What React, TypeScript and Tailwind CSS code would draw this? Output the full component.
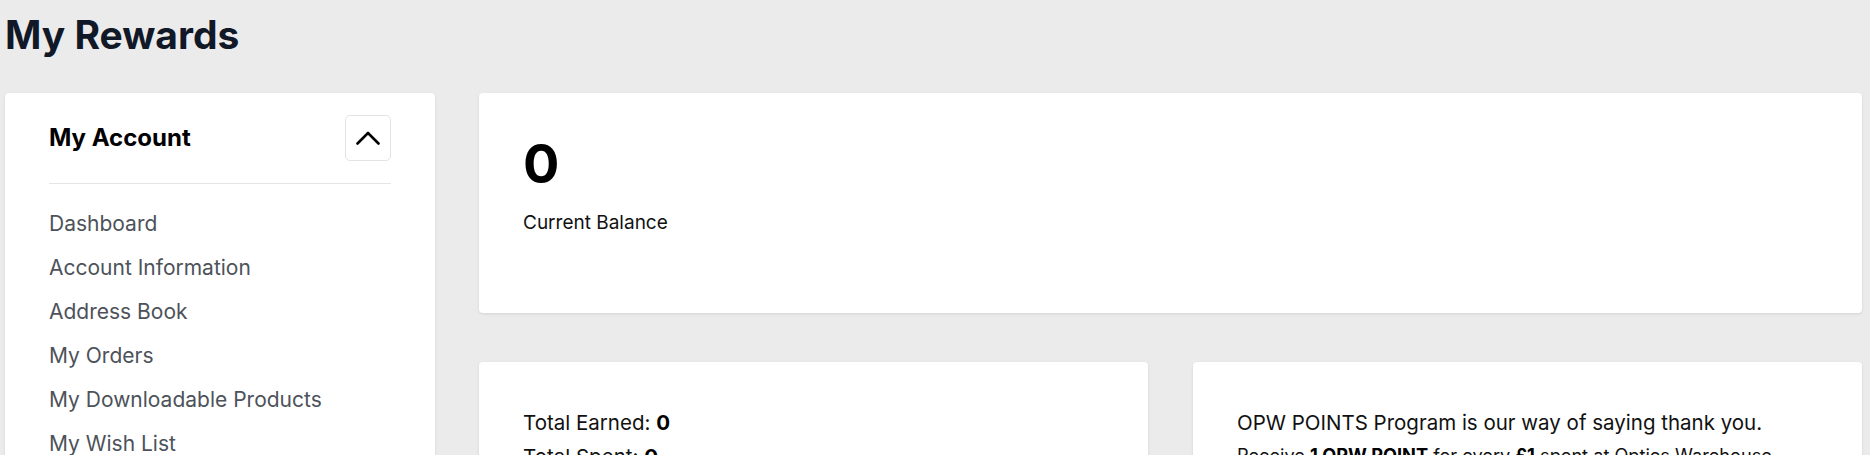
import React from "react";

const menu = [
  "Dashboard",
  "Account Information",
  "Address Book",
  "My Orders",
  "My Downloadable Products",
  "My Wish List",
];

export default function App() {
  return (
    <div className="min-h-screen bg-[#ebebeb] pl-[5px] pr-[8px] font-['Inter',sans-serif]">
      <h1 className="pt-[11px] text-[39px] leading-[47px] font-bold text-[#111827]">My Rewards</h1>
      <div className="mt-[35px] flex gap-[44px]">
        <aside className="w-[430px] shrink-0 rounded-[4px] bg-white px-[44px] pt-[22px] pb-[40px] shadow-[0_1px_3px_rgba(0,0,0,0.1)]">
          <div className="flex items-center justify-between">
            <span className="text-[24px] font-bold text-black">My Account</span>
            <button className="flex h-[46px] w-[46px] items-center justify-center rounded-[5px] border border-[#e3e3e3] bg-white">
              <svg width="24" height="14" viewBox="0 0 24 14" fill="none">
                <polyline points="1.5,12.5 12,2 22.5,12.5" stroke="#000" strokeWidth="2.6" strokeLinecap="round" strokeLinejoin="round" />
              </svg>
            </button>
          </div>
          <div className="mt-[22px] h-px bg-[#e5e5e5]" />
          <ul className="mt-[18px]">
            {menu.map((m) => (
              <li key={m} className="text-[21px] leading-[44px] text-[#4d525a]">{m}</li>
            ))}
          </ul>
        </aside>
        <main className="flex-1">
          <section className="h-[220px] rounded-[4px] bg-white p-[44px] shadow-[0_1px_3px_rgba(0,0,0,0.1)]">
            <div className="text-[54px] leading-none font-bold text-black">0</div>
            <div className="mt-[18px] text-[19px] leading-[28px] text-[#111]">Current Balance</div>
          </section>
          <div className="mt-[49px] grid grid-cols-2 gap-[45px]">
            <section className="h-[200px] rounded-[4px] bg-white p-[44px] shadow-[0_1px_3px_rgba(0,0,0,0.1)]">
              <p className="text-[20.5px] leading-[34px] text-[#111]">Total Earned: <b className="font-bold text-black">0</b></p>
              <p className="text-[20.5px] leading-[34px] text-[#111]">Total Spent: <b className="font-bold text-black">0</b></p>
            </section>
            <section className="h-[200px] rounded-[4px] bg-white p-[44px] shadow-[0_1px_3px_rgba(0,0,0,0.1)]">
              <p className="text-[20.5px] leading-[34px] text-[#111]">OPW POINTS Program is our way of saying thank you.</p>
              <p className="text-[18.2px] leading-[30px] text-[#111]">
                Receive <b className="font-bold text-black">1 OPW POINT</b> for every <b className="font-bold text-black">£1</b> spent at Optics Warehouse.
              </p>
            </section>
          </div>
        </main>
      </div>
    </div>
  );
}
